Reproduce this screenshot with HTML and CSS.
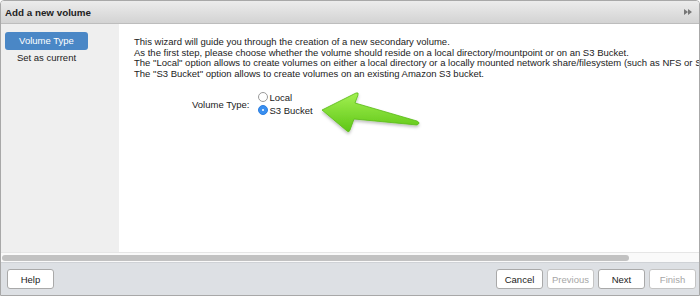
FILE: index.html
```html
<!DOCTYPE html>
<html>
<head>
<meta charset="utf-8">
<link rel="stylesheet" href="styles.css">
</head>
<body>
<div class="window">
  <div class="header">
    <span class="title">Add a new volume</span>
    <svg class="collapse" width="8" height="6" viewBox="0 0 8 6"><path d="M0 0 L4 3 L0 6 Z M4 0 L8 3 L4 6 Z" fill="#777"/></svg>
  </div>
  <div class="body">
    <div class="sidebar">
      <div class="step active">Volume Type</div>
      <div class="step">Set as current</div>
    </div>
    <div class="content">
      <div class="intro">
        <div>This wizard will guide you through the creation of a new secondary volume.</div>
        <div>As the first step, please choose whether the volume should reside on a local directory/mountpoint or on an S3 Bucket.</div>
        <div>The "Local" option allows to create volumes on either a local directory or a locally mounted network share/filesystem (such as NFS or SMB).</div>
        <div>The "S3 Bucket" option allows to create volumes on an existing Amazon S3 bucket.</div>
      </div>
      <div class="field">
        <div class="label">Volume Type:</div>
        <div class="radios">
          <div class="radio"><span class="dot"></span>Local</div>
          <div class="radio"><span class="dot on"></span>S3 Bucket</div>
        </div>
        <svg class="arrow" width="110" height="52" viewBox="0 0 110 52">
          <defs>
            <linearGradient id="g" x1="0" y1="0" x2="0" y2="1">
              <stop offset="0" stop-color="#a3f052"/>
              <stop offset="1" stop-color="#5ec615"/>
            </linearGradient>
            <filter id="s" x="-20%" y="-20%" width="140%" height="160%">
              <feDropShadow dx="0" dy="2" stdDeviation="1.5" flood-color="#000" flood-opacity="0.25"/>
            </filter>
          </defs>
          <path d="M4 22 L38 5 Q41 4 40 7 L37 15 L99 33 Q103 35 99 37 L36 31 L32 42 Q31 45 29 43 Z" fill="url(#g)" stroke="#58ba14" stroke-width="0.8" filter="url(#s)"/>
        </svg>
      </div>
    </div>
  </div>
  <div class="hscroll"><div class="thumb"></div></div>
  <div class="footer">
    <button class="btn">Help</button>
    <div class="spacer"></div>
    <button class="btn">Cancel</button>
    <button class="btn disabled">Previous</button>
    <button class="btn">Next</button>
    <button class="btn disabled">Finish</button>
  </div>
</div>
</body>
</html>
```
FILE: styles.css
```css
html, body {
  margin: 0;
  padding: 0;
  background: #ffffff;
}
body {
  font-family: "Liberation Sans", Arial, sans-serif;
  font-size: 9.5px;
  color: #222;
}
.window {
  width: 700px;
  height: 296px;
  box-sizing: border-box;
  border: 1px solid #a8a8a8;
  border-radius: 4px 4px 0 0;
  display: flex;
  flex-direction: column;
  overflow: hidden;
}
.header {
  height: 22px;
  flex: none;
  background: linear-gradient(#ececec, #d3d3d3);
  border-bottom: 1px solid #bdbdbd;
  display: flex;
  align-items: center;
  padding: 0 7px 0 4px;
}
.title {
  font-weight: bold;
  font-size: 9.8px;
  color: #222;
  flex: 1;
}
.body {
  flex: 1;
  display: flex;
  min-height: 0;
}
.sidebar {
  width: 118px;
  flex: none;
  background: #efefef;
  padding-top: 8px;
  box-sizing: border-box;
}
.step {
  margin: 0 31px 0 4px;
  height: 16px;
  line-height: 16px;
  text-align: center;
  color: #222;
}
.step.active {
  height: 18px;
  line-height: 18px;
  background: #4a87c6;
  color: #fff;
  border-radius: 3px;
}
.content {
  flex: 1;
  background: #fff;
  padding: 13px 0 0 15px;
  white-space: nowrap;
  overflow: hidden;
  min-width: 0;
}
.intro div {
  line-height: 10.7px;
}
.field {
  display: flex;
  align-items: center;
  margin-top: 10.7px;
  padding-left: 58px;
  position: relative;
}
.label {
  margin-right: 9px;
  padding-top: 1px;
}
.radios {
  display: flex;
  flex-direction: column;
}
.radio {
  display: flex;
  align-items: center;
  height: 13px;
  line-height: 13px;
}
.dot {
  width: 10px;
  height: 10px;
  box-sizing: border-box;
  border: 1px solid #9a9a9a;
  border-radius: 50%;
  background: #fff;
  margin-right: 1px;
  position: relative;
}
.dot.on {
  background: #3a8ff0;
  border-color: #2d7fe0;
}
.dot.on::after {
  content: "";
  position: absolute;
  left: 3px;
  top: 3px;
  width: 2px;
  height: 2px;
  border-radius: 50%;
  background: #fff;
}
.arrow {
  position: absolute;
  left: 184px;
  top: -3px;
}
.hscroll {
  height: 10px;
  flex: none;
  background: #fafafa;
  border-top: 1px solid #e6e6e6;
  box-sizing: border-box;
  display: flex;
  align-items: center;
  padding: 0 1px;
}
.thumb {
  width: 627px;
  height: 6px;
  border-radius: 3px;
  background: #c2c2c2;
}
.footer {
  height: 33px;
  flex: none;
  box-sizing: border-box;
  background: #dde0e4;
  border-top: 1px solid #cfd2d6;
  display: flex;
  align-items: center;
  padding: 0 3px 0 6px;
  gap: 4px;
}
.spacer {
  flex: 1;
}
.btn {
  font-family: "Liberation Sans", Arial, sans-serif;
  font-size: 9.5px;
  height: 20px;
  width: 47px;
  padding: 0;
  background: #fff;
  border: 1px solid #a9a9a9;
  border-radius: 3px;
  color: #222;
}
.btn.disabled {
  color: #a6a6a6;
  border-color: #c4c4c4;
}
```
